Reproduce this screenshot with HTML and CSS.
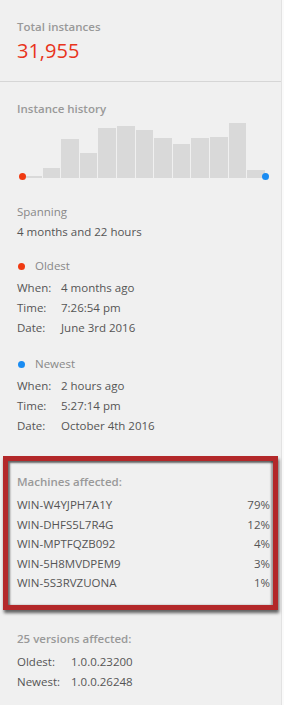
FILE: index.html
```html
<!DOCTYPE html>
<html lang="en">
<head>
    <meta charset="UTF-8">
    <meta name="viewport" content="width=device-width, initial-scale=1.0">
    <title>Instance details</title>
    <link rel="stylesheet" href="styles.css">
</head>
<body>

<div class="panel">
    <div class="section total">
        <div class="title">Total instances</div>
        <div class="big-number">31,955</div>
    </div>

    <div class="section history">
        <div class="title">Instance history</div>
        <div class="chart">
            <div class="bar" style="height: 2px"></div>
            <div class="bar" style="height: 10px"></div>
            <div class="bar" style="height: 39px"></div>
            <div class="bar" style="height: 25px"></div>
            <div class="bar" style="height: 50px"></div>
            <div class="bar" style="height: 52px"></div>
            <div class="bar" style="height: 48px"></div>
            <div class="bar" style="height: 40px"></div>
            <div class="bar" style="height: 34px"></div>
            <div class="bar" style="height: 40px"></div>
            <div class="bar" style="height: 41px"></div>
            <div class="bar" style="height: 55px"></div>
            <div class="bar" style="height: 8px"></div>
            <span class="dot dot-old chart-start"></span>
            <span class="dot dot-new chart-end"></span>
        </div>

        <div class="spanning">
            <div class="label">Spanning</div>
            <div class="value">4 months and 22 hours</div>
        </div>

        <div class="point">
            <div class="label"><span class="dot dot-old"></span>Oldest</div>
            <div class="row"><span class="key">When:</span>4 months ago</div>
            <div class="row"><span class="key">Time:</span>7:26:54 pm</div>
            <div class="row"><span class="key">Date:</span>June 3rd 2016</div>
        </div>

        <div class="point newest">
            <div class="label"><span class="dot dot-new"></span>Newest</div>
            <div class="row"><span class="key">When:</span>2 hours ago</div>
            <div class="row"><span class="key">Time:</span>5:27:14 pm</div>
            <div class="row"><span class="key">Date:</span>October 4th 2016</div>
        </div>
    </div>

    <!-- highlighted block -->
    <div class="machines">
        <div class="title">Machines affected:</div>
        <div class="row"><span>WIN-W4YJPH7A1Y</span><span>79%</span></div>
        <div class="row"><span>WIN-DHFS5L7R4G</span><span>12%</span></div>
        <div class="row"><span>WIN-MPTFQZB092</span><span>4%</span></div>
        <div class="row"><span>WIN-5H8MVDPEM9</span><span>3%</span></div>
        <div class="row"><span>WIN-5S3RVZUONA</span><span>1%</span></div>
    </div>

    <div class="section versions">
        <div class="title">25 versions affected:</div>
        <div class="row"><span class="key">Oldest:</span>1.0.0.23200</div>
        <div class="row"><span class="key">Newest:</span>1.0.0.26248</div>
    </div>
</div>

</body>
</html>
```

FILE: styles.css
```css
/* General styling */
body {
    margin: 0;
    padding: 0;
    background: #fafafa;
    font-family: 'Open Sans', 'Liberation Sans', sans-serif;
    font-size: 11.5px;
    color: #555;
}
.panel {
    width: 281px;
    min-height: 705px;
    background: #f0f0f0;
    border-right: 1px solid #e2e2e2;
}
.section {
    padding: 0 17px;
}
.title {
    font-size: 11.5px;
    font-weight: 600;
    color: #999;
    line-height: 20px;
}

/* Total */
.total {
    padding-top: 17px;
    padding-bottom: 17px;
    border-bottom: 1px solid #d6d6d6;
}
.big-number {
    margin-top: 1px;
    font-size: 20px;
    line-height: 26px;
    color: #e8341c;
}

/* History chart */
.history {
    padding-top: 17px;
}
.chart {
    position: relative;
    display: flex;
    align-items: flex-end;
    gap: 1px;
    height: 57px;
    margin: 2px -1px 0 7px;
}
.bar {
    flex: 1;
    background: #d9d9d9;
}
.dot {
    display: inline-block;
    width: 7px;
    height: 7px;
    border-radius: 50%;
}
.dot-old {
    background: #f03a12;
}
.dot-new {
    background: #1a8cf2;
}
.chart-start,
.chart-end {
    position: absolute;
    bottom: -2px;
}
.chart-start {
    left: -5px;
}
.chart-end {
    right: -4px;
}

/* Details */
.label {
    line-height: 20px;
    color: #888;
}
.value {
    line-height: 20px;
}
.spanning {
    margin-top: 24px;
}
.point {
    margin-top: 14px;
}
.point .label .dot {
    margin: 0 10px 0 1px;
}
.point .label {
    margin-bottom: 2px;
}
.newest {
    margin-top: 16px;
}
.row {
    line-height: 20px;
}
.key {
    display: inline-block;
    width: 44px;
}

/* Highlighted machines block */
.machines {
    margin: 20px 3px 0 3px;
    padding: 11px 3px 12px 9px;
    border: 5px solid #b3282a;
    box-shadow: inset 2px 2px 2px rgba(0, 0, 0, 0.55), inset -2px 0 2px rgba(0, 0, 0, 0.35), 1px 3px 3px rgba(0, 0, 0, 0.6);
}
.machines .title {
    margin-bottom: 3px;
}
.machines .row {
    display: flex;
    justify-content: space-between;
    line-height: 19.5px;
}

/* Versions */
.versions {
    padding-top: 19px;
}
.versions .title {
    margin-bottom: 3px;
}
.versions .key {
    width: 54px;
}
```
